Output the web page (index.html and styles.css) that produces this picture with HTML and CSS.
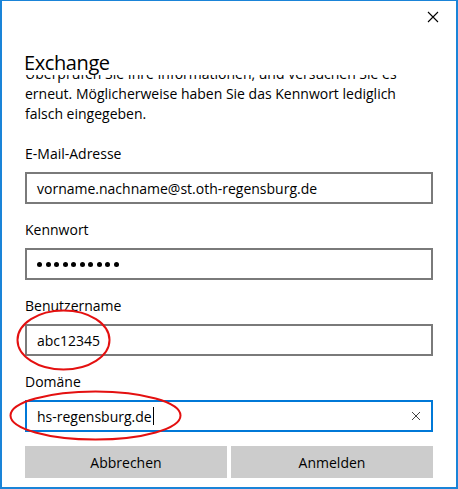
FILE: index.html
```html
<!DOCTYPE html>
<html lang="de">
<head>
  <meta charset="UTF-8" />
  <title>Exchange</title>
  <link rel="stylesheet" href="styles.css">
</head>
<body>
  <div class="window">
    <div class="titlebar">
      <button class="close" aria-label="Schließen">
        <svg width="12" height="12" viewBox="0 0 12 12"><path d="M1 1 L11 11 M11 1 L1 11" stroke="#000" stroke-width="1.1" fill="none"/></svg>
      </button>
    </div>

    <h1 class="title">Exchange</h1>

    <div class="scroll">
      <div class="scroll-inner">
        <p class="message">Überprüfen Sie Ihre Informationen, und versuchen Sie es erneut. Möglicherweise haben Sie das Kennwort lediglich falsch eingegeben.</p>

        <div class="field">
          <label>E-Mail-Adresse</label>
          <div class="input">vorname.nachname@st.oth-regensburg.de</div>
        </div>
        <div class="field">
          <label>Kennwort</label>
          <div class="input password">
            <span class="dot"></span><span class="dot"></span><span class="dot"></span><span class="dot"></span><span class="dot"></span><span class="dot"></span><span class="dot"></span><span class="dot"></span><span class="dot"></span><span class="dot"></span>
          </div>
        </div>
        <div class="field">
          <label>Benutzername</label>
          <div class="input">abc12345</div>
        </div>
        <div class="field">
          <label>Domäne</label>
          <div class="input focused">
            <span>hs-regensburg.de</span><span class="caret"></span>
            <svg class="clear" width="10" height="10" viewBox="0 0 10 10"><path d="M1 1 L9 9 M9 1 L1 9" stroke="#444" stroke-width="1" fill="none"/></svg>
          </div>
        </div>
      </div>
    </div>

    <div class="buttons">
      <button class="btn">Abbrechen</button>
      <button class="btn">Anmelden</button>
    </div>

    <!-- hand-drawn marks over the form -->
    <svg class="marks" width="458" height="489" viewBox="0 0 458 489">
      <ellipse cx="63.5" cy="340" rx="46" ry="29.5" fill="none" stroke="#e41010" stroke-width="2"/>
      <ellipse cx="95.5" cy="415.5" rx="85" ry="24" fill="none" stroke="#e41010" stroke-width="2"/>
    </svg>
  </div>
</body>
</html>
```

FILE: styles.css
```css
* {
  box-sizing: border-box;
}
body {
  margin: 0;
  font-family: "Open Sans", "Noto Sans", sans-serif;
  font-size: 14px;
  color: #000;
  background: #fff;
}
.window {
  position: relative;
  width: 458px;
  height: 489px;
  border: 2px solid #1a84d8;
  border-top-width: 1px;
  display: flex;
  flex-direction: column;
  padding: 0 23px 9px 23px;
  overflow: hidden;
}
.titlebar {
  height: 50px;
  display: flex;
  justify-content: flex-end;
  align-items: flex-start;
  margin-right: -23px;
}
.close {
  border: 0;
  background: none;
  padding: 0;
  width: 46px;
  height: 31px;
  display: flex;
  align-items: center;
  justify-content: center;
}
.title {
  margin: 0 0 0 -1px;
  font-size: 20px;
  font-weight: normal;
  line-height: 24px;
  height: 24px;
  letter-spacing: -0.4px;
}
.scroll {
  flex: 1;
  overflow: hidden;
}
.scroll-inner {
  margin-top: -11px;
}
.message {
  margin: 0 0 20px 0;
  line-height: 20px;
  padding-right: 20px;
}
.field {
  margin-bottom: 16px;
}
.field label {
  display: block;
  line-height: 20px;
  margin-bottom: 8px;
}
.input {
  height: 32px;
  border: 2px solid #7a7a7a;
  padding: 0 10px;
  display: flex;
  align-items: center;
  white-space: nowrap;
}
.input.focused {
  border-color: #0078d7;
}
.password {
  gap: 3.5px;
}
.dot {
  width: 5px;
  height: 5px;
  border-radius: 50%;
  background: #000;
}
.caret {
  width: 1px;
  height: 18px;
  background: #000;
  margin-left: 1px;
}
.clear {
  margin-left: auto;
  margin-right: 0;
}
.buttons {
  display: grid;
  grid-template-columns: 1fr 1fr;
  gap: 4px;
}
.btn {
  height: 32px;
  border: 0;
  background: #cccccc;
  font-family: inherit;
  font-size: 14px;
  color: #000;
}
.marks {
  position: absolute;
  left: -2px;
  top: -1px;
  pointer-events: none;
}
```
